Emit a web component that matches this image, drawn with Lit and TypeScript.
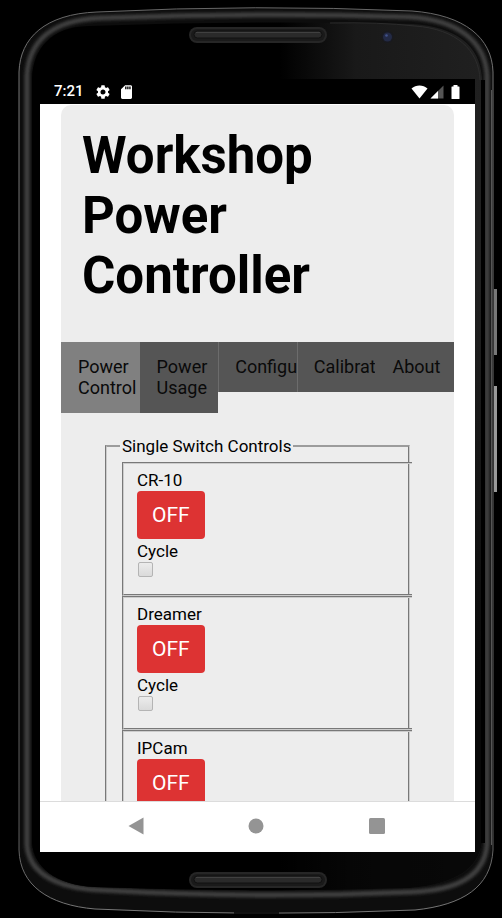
import { LitElement, html, css, svg } from "lit";
import { customElement, property } from "lit/decorators.js";

@customElement("device-shell")
class DeviceShell extends LitElement {
  static styles = css`
    :host {
      position: absolute;
      inset: 0;
      display: block;
    }
    .shell {
      display: block;
      width: 100%;
      height: 100%;
    }
  `;

  private speaker(y: number) {
    return svg`
      <rect x="189" y=${y} width="138" height="16" rx="8" fill="#262626" />
      <rect x="191" y=${y + 2} width="134" height="12" rx="6" fill="#1a1a1a" />
      <rect x="194" y=${y + 4} width="128" height="7" rx="3.5" fill="#2a2a2a" stroke="#111" />
      <path d="M196 ${y + 5.5}H320" stroke="#404040" />
    `;
  }

  render() {
    return html`
      <svg class="shell" viewBox="0 0 502 918" preserveAspectRatio="none" aria-hidden="true">
        <defs>
          <linearGradient id="glass" x1="0" x2="1">
            <stop offset="0.55" stop-color="#000" />
            <stop offset="0.72" stop-color="#191919" />
            <stop offset="1" stop-color="#202020" />
          </linearGradient>
          <linearGradient id="shade" x1="0" y1="0" x2="0" y2="1">
            <stop offset="0.3" stop-color="#000" stop-opacity="0" />
            <stop offset="0.8" stop-color="#000" stop-opacity="0.75" />
          </linearGradient>
          <linearGradient id="edge" x1="0" x2="0" y1="0" y2="1">
            <stop offset="0" stop-color="#666" />
            <stop offset="0.1" stop-color="#777" />
            <stop offset="0.9" stop-color="#5a5a5a" />
            <stop offset="1" stop-color="#777" />
          </linearGradient>
          <filter id="soft" x="-5%" y="-5%" width="110%" height="110%">
            <feGaussianBlur stdDeviation="1.5" />
          </filter>
        </defs>
        <path d="M494 289H497V355H494Z" fill="#777" />
        <path d="M494 386H497V492H494Z" fill="#999" />
        <path
          d="M19 72C20 38 45 14 97 12Q256 4 412 11C465 15 492 38 493 72V850C491 887 463 905 415 910Q256 917 95 909C48 905 20 885 19 850Z"
          fill="#0d0d0d" stroke="url(#edge)"
        />
        <path
          d="M27 75C29 43 50 20 100 18Q256 12 410 17C460 20 485 43 487 75V845C484 876 458 890 412 892Q256 899 100 890C54 888 29 872 27 845Z"
          fill="none" stroke="#404040" stroke-width="5" filter="url(#soft)"
        />
        <path
          d="M32 78C33 50 50 27 88 26Q256 20 412 24C456 27 480 45 482 78V843C478 868 457 884 410 888Q256 893 95 887C54 885 34 866 32 843Z"
          fill="url(#glass)"
        />
        <path
          d="M32 78C33 50 50 27 88 26Q256 20 412 24C456 27 480 45 482 78V843C478 868 457 884 410 888Q256 893 95 887C54 885 34 866 32 843Z"
          fill="url(#shade)"
        />
        <path d="M330 23Q380 22 415 26C456 29 479 50 480 80" fill="none" stroke="#2c2c2c" />
        <path d="M491.500 90V845" stroke="#555" />
        <path d="M483 80V843" stroke="#000" stroke-width="4" />
        <path d="M234 913H279" stroke="#111" stroke-width="2" />
        ${this.speaker(27)} ${this.speaker(872)}
        <circle cx="387.500" cy="37" r="6" fill="#191a20" />
        <circle cx="387.500" cy="37" r="4.500" fill="#232a45" />
        <circle cx="386.500" cy="35.500" r="1.300" fill="#42528a" />
      </svg>
    `;
  }
}

@customElement("status-bar")
class StatusBar extends LitElement {
  static styles = css`
    :host {
      display: flex;
      align-items: center;
      height: 25px;
      padding: 0 15px 0 14px;
      background: #000;
      color: #fff;
      font: 500 15px/25px Roboto, sans-serif;
      flex: none;
    }
    .icon {
      display: block;
      flex: none;
    }
    .time {
      margin-right: 12px;
    }
    .card {
      margin-left: 11px;
      margin-right: auto;
    }
    .signal {
      margin: 0 7px 0 2px;
    }
  `;

  render() {
    return html`
      <span class="time">7:21</span>
      <svg class="icon" width="14" height="14" viewBox="2 2 20 20" fill="#fff">
        <path
          d="M19.140 12.940c.04-.3.06-.61.06-.94 0-.32-.02-.64-.07-.94l2.030-1.580a.49.49 0 0 0 .12-.61l-1.920-3.320a.49.49 0 0 0-.59-.22l-2.390.96a7 7 0 0 0-1.620-.94l-.36-2.540A.48.48 0 0 0 13.920 2.400h-3.840a.48.48 0 0 0-.47.41l-.36 2.540c-.59.24-1.130.57-1.620.94l-2.390-.96a.48.48 0 0 0-.59.22L2.740 8.870a.48.48 0 0 0 .12.61l2.030 1.580c-.05.3-.09.63-.09.94s.02.64.07.94l-2.030 1.580a.49.49 0 0 0-.12.61l1.920 3.320c.12.22.37.29.59.22l2.390-.96c.5.38 1.030.7 1.620.94l.36 2.540c.05.24.24.41.48.41h3.840c.24 0 .44-.17.47-.41l.36-2.540a6.500 6.500 0 0 0 1.620-.94l2.390.96c.22.08.47 0 .59-.22l1.920-3.320a.48.48 0 0 0-.12-.61zM12 15.600A3.610 3.610 0 0 1 8.400 12c0-1.980 1.620-3.600 3.600-3.600s3.600 1.620 3.600 3.600-1.620 3.600-3.600 3.600z"
        />
      </svg>
      <svg class="icon card" width="11" height="14" viewBox="4 2 16 20" fill="#fff">
        <path d="M18 2h-8L4.020 8 4 20c0 1.100.9 2 2 2h12c1.100 0 2-.9 2-2V4c0-1.100-.9-2-2-2zm-6 6h-2V4h2v4zm3 0h-2V4h2v4zm3 0h-2V4h2v4z" />
      </svg>
      <svg class="icon" width="17" height="14" viewBox="0 0 17 14" fill="#fff">
        <path d="M0.500 3.500C5 -0.500 12 -0.500 16.500 3.500L8.500 13.500Z" />
      </svg>
      <svg class="icon signal" width="14" height="14" viewBox="0 0 14 14">
        <path d="M13.500 0.500V13.500H0.500Z" fill="#555" />
        <path d="M8 6V13.500H0.500Z" fill="#fff" />
      </svg>
      <svg class="icon" width="9" height="14" viewBox="0 0 9 14" fill="#fff">
        <path d="M2.500 0h4v1.500h1.500q.5 0 .5.5v11.500q0 .5-.5.5h-7q-.5 0-.5-.5v-11.500q0-.5.5-.5h1.500z" />
      </svg>
    `;
  }
}

@customElement("nav-keys")
class NavKeys extends LitElement {
  static styles = css`
    :host {
      display: flex;
      align-items: center;
      justify-content: space-around;
      box-sizing: border-box;
      flex: none;
      height: 51px;
      padding: 0 38px 2px 36px;
      border-top: 1px solid #dcdcdc;
      background: #fff;
    }
    .key {
      display: block;
      padding: 0;
      border: 0;
      background: none;
    }
    .glyph {
      display: block;
      fill: #949494;
    }
  `;

  render() {
    return html`
      <button class="key" aria-label="Back">
        <svg class="glyph" width="18" height="18" viewBox="0 0 18 18"><path d="M1.500 9L16.500 0.500V17.500Z" /></svg>
      </button>
      <button class="key" aria-label="Home">
        <svg class="glyph" width="18" height="18" viewBox="0 0 18 18"><circle cx="9" cy="9" r="7.500" /></svg>
      </button>
      <button class="key" aria-label="Recents">
        <svg class="glyph" width="18" height="18" viewBox="0 0 18 18"><rect x="1" y="1" width="16" height="16" rx="1.500" /></svg>
      </button>
    `;
  }
}

@customElement("switch-control")
class SwitchControl extends LitElement {
  @property() name = "";

  static styles = css`
    :host {
      display: block;
      box-sizing: border-box;
      height: 134px;
      margin-right: -4px;
      padding: 5px 13px 0;
      border: 2px groove #ccc;
      border-right: 0;
      color: #000;
      font: 17px/22px Roboto, sans-serif;
    }
    .name,
    .label {
      display: block;
    }
    .toggle {
      display: block;
      height: 48px;
      margin-bottom: 1px;
      padding: 0 15px;
      border: 0;
      border-radius: 4px;
      background: #dd3333;
      color: #fff;
      font: 21px/48px Roboto, sans-serif;
    }
    .box {
      display: block;
      appearance: none;
      box-sizing: border-box;
      width: 15px;
      height: 15px;
      margin: 0 1px;
      border: 1px solid #b4b4b4;
      border-radius: 2px;
      background: linear-gradient(#ececec, #dadada);
    }
  `;

  render() {
    return html`
      <span class="name">${this.name}</span>
      <button class="toggle">OFF</button>
      <label class="label" for="cycle">Cycle</label>
      <input class="box" id="cycle" type="checkbox" />
    `;
  }
}

@customElement("app-root")
class AppRoot extends LitElement {
  private tabs = ["Power Control", "Power Usage", "Configuration", "Calibration", "About"];
  private switches = ["CR-10", "Dreamer", "IPCam"];

  static styles = css`
    :host {
      position: relative;
      display: flex;
      box-sizing: border-box;
      height: 100vh;
      padding: 79px 27px 66px 40px;
      background: #000;
      font-family: Roboto, sans-serif;
      overflow: hidden;
    }
    .screen {
      position: relative;
      display: flex;
      flex: 1;
      flex-direction: column;
      min-width: 0;
      background: #fff;
    }
    .viewport {
      flex: 1;
      min-height: 0;
      overflow: hidden;
      padding: 1px 21px 0;
    }
    .page {
      border-radius: 10px;
      background: #ededed;
      color: #000;
      padding-bottom: 40px;
    }
    .title {
      margin: 0;
      padding: 21px 21px 36px;
      font-size: 51px;
      line-height: 60px;
      font-weight: 700;
    }
    .tabs {
      display: grid;
      grid-template-columns: repeat(5, minmax(0, 1fr));
      align-items: start;
      height: 71px;
    }
    .tab {
      padding: 14px 0 15px 17px;
      border: 0;
      overflow: hidden;
      background: #555;
      color: #0a0a0a;
      font: 18px/21px Roboto, sans-serif;
      text-align: left;
    }
    .tab.active {
      background: #808080;
    }
    .tab.divided {
      box-shadow: inset 1px 0 #6c6c6c;
    }
    .group {
      min-width: 0;
      margin: 22px 44px 0;
      padding: 5px 0 16px 15px;
      border: 2px groove #ccc;
      border-top: 2px solid #9c9c9c;
    }
    .legend {
      margin-left: -2px;
      padding: 0 2px;
      font-size: 17px;
      line-height: 22px;
    }
  `;

  render() {
    return html`
      <device-shell></device-shell>
      <div class="screen">
        <status-bar></status-bar>
        <main class="viewport">
          <div class="page">
            <h1 class="title">Workshop Power Controller</h1>
            <div class="tabs" role="tablist">
              ${this.tabs.map(
                (t, i) => html`<button
                  class="tab ${i === 0 ? "active" : ""} ${i === 2 || i === 3 ? "divided" : ""}"
                  role="tab"
                  aria-selected=${i === 0}
                >${t}</button>`
              )}
            </div>
            <fieldset class="group">
              <legend class="legend">Single Switch Controls</legend>
              ${this.switches.map((s) => html`<switch-control .name=${s}></switch-control>`)}
            </fieldset>
          </div>
        </main>
        <nav-keys></nav-keys>
      </div>
    `;
  }
}
